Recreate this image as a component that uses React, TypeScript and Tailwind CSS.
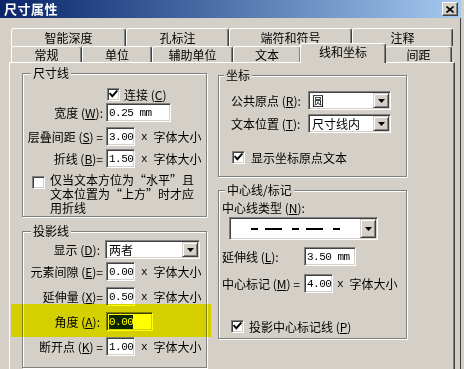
import React from "react";

const U = ({ c }: { c: string }) => <span className="underline underline-offset-[1px]">{c}</span>;

function Tab({ label, w, cls = "" }: { label: string; w: string; cls?: string }) {
  return (
    <div
      className={`flex items-center justify-center shrink-0 bg-[#d4d0c8] border-t border-l border-r border-t-white border-l-white border-r-[#404040] rounded-t-[3px] shadow-[inset_-1px_0_0_#808080] ${w} ${cls}`}
    >
      {label}
    </div>
  );
}

function Group({ label, cls, labelCls, children }: { label: string; cls: string; labelCls: string; children?: React.ReactNode }) {
  return (
    <div className={`relative border border-[#808080] shadow-[inset_1px_1px_0_#ffffff,1px_1px_0_#ffffff] ${cls}`}>
      <span className={`absolute -top-[8px] bg-[#d4d0c8] px-[2px] leading-[14px] ${labelCls}`}>{label}</span>
      {children}
    </div>
  );
}

function Input({ value, w, selected }: { value: string; w: string; selected?: boolean }) {
  return (
    <div
      className={`flex items-center h-full bg-white border border-t-[#808080] border-l-[#808080] border-r-white border-b-white shadow-[inset_1px_1px_0_#404040,inset_-1px_-1px_0_#d4d0c8] pl-[2px] font-['Liberation_Mono',monospace] text-[11px] tracking-[-0.5px] ${w}`}
    >
      {selected ? <span className="bg-[#0a246a] text-white leading-[14px]">{value}</span> : value}
    </div>
  );
}

function Arrow() {
  return (
    <svg width="7" height="4" viewBox="0 0 7 4">
      <path d="M0 0H7L3.5 4Z" fill="#000" />
    </svg>
  );
}

function DropBtn() {
  return (
    <div className="flex items-center justify-center w-[16px] h-full bg-[#d4d0c8] border border-t-[#d4d0c8] border-l-[#d4d0c8] border-r-[#404040] border-b-[#404040] shadow-[inset_1px_1px_0_#ffffff,inset_-1px_-1px_0_#808080]">
      <Arrow />
    </div>
  );
}

function Combo({ value, w, h = "h-full" }: { value: React.ReactNode; w: string; h?: string }) {
  return (
    <div
      className={`flex items-stretch bg-white border border-t-[#808080] border-l-[#808080] border-r-white border-b-white shadow-[inset_1px_1px_0_#404040,inset_-1px_-1px_0_#d4d0c8] p-[1px] ${w} ${h}`}
    >
      <div className="flex-1 flex items-center pl-[2px]">{value}</div>
      <DropBtn />
    </div>
  );
}

function Check({ checked }: { checked?: boolean }) {
  return (
    <div className="w-[13px] h-[13px] shrink-0 bg-white border border-t-[#808080] border-l-[#808080] border-r-white border-b-white shadow-[inset_1px_1px_0_#404040,inset_-1px_-1px_0_#d4d0c8] flex items-center justify-center">
      {checked && (
        <svg width="9" height="9" viewBox="0 0 9 9">
          <path d="M1.2 3.8L3.3 6.2L7.8 1.2" stroke="#000" strokeWidth="1.9" fill="none" strokeLinecap="square" />
        </svg>
      )}
    </div>
  );
}

const Times = ({ ml = "ml-[6px]" }: { ml?: string }) => (
  <>
    <span className={`${ml} font-['Liberation_Mono',monospace] text-[11px]`}>x</span>
    <span className="ml-[6px]">字体大小</span>
  </>
);

export default function App() {
  return (
    <div className="relative w-[464px] h-[369px] overflow-hidden bg-[#d4d0c8] text-black text-[12px] leading-[14px] font-['Noto_Sans_CJK_SC','Noto_Sans',sans-serif] shadow-[inset_-3px_0_0_#d4d0c8,inset_-4px_0_0_#404040]">
      {/* title bar */}
      <div className="flex items-center h-[18px] w-[461px] bg-linear-to-r from-[#0a246a] to-[#a6caf0] pl-[4px] pr-[3px]">
        <span className="text-white font-bold text-[13px] tracking-[0.5px]">尺寸属性</span>
        <div className="ml-auto flex items-center justify-center w-[16px] h-[14px] bg-[#d4d0c8] border border-t-white border-l-white border-r-[#404040] border-b-[#404040] shadow-[inset_-1px_-1px_0_#808080]">
          <svg width="8" height="7" viewBox="0 0 8 7">
            <path d="M0.5 0.5L7.5 6.5M7.5 0.5L0.5 6.5" stroke="#000" strokeWidth="1.6" />
          </svg>
        </div>
      </div>

      {/* tabs */}
      <div className="pt-[10px] pl-[11px]">
        <div className="flex h-[18px]">
          <Tab label="智能深度" w="w-[115px]" />
          <Tab label="孔标注" w="w-[103px]" />
          <Tab label="端符和符号" w="w-[123px]" />
          <Tab label="注释" w="w-[101px]" />
        </div>
        <div className="flex items-end h-[16px] relative z-10">
          <Tab label="常规" w="w-[71px]" cls="h-[16px]" />
          <Tab label="单位" w="w-[70px]" cls="h-[16px]" />
          <Tab label="辅助单位" w="w-[81px]" cls="h-[16px]" />
          <Tab label="文本" w="w-[68px]" cls="h-[16px]" />
          <Tab label="线和坐标" w="w-[86px]" cls="h-[20px] -mb-[1px] -mx-[1px] relative z-10 pb-[3px]" />
          <Tab label="间距" w="w-[67px]" cls="h-[16px]" />
        </div>
      </div>

      {/* panel */}
      <div className="ml-[9px] w-[446px] h-[310px] border border-t-white border-l-white border-r-[#404040] border-b-[#404040] shadow-[inset_-1px_-1px_0_#808080] flex">
        {/* left column */}
        <div className="ml-[12px] mt-[10px] w-[185px] flex flex-col">
          <Group label="尺寸线" cls="h-[144px]" labelCls="left-[8px]">
            <div className="mt-[14px] flex items-center h-[13px] pl-[84px]">
              <Check checked />
              <span className="ml-[4px]">连接 (<U c="C" />)</span>
            </div>
            <div className="mt-[2px] flex items-center h-[19px]">
              <span className="w-[80px] text-right">宽度 (<U c="W" />):</span>
              <div className="ml-[3px] h-full flex">
                <Input value="0.25 mm" w="w-[65px]" />
              </div>
            </div>
            <div className="mt-[5px] flex items-center h-[19px]">
              <span className="w-[80px] text-right whitespace-nowrap">层叠间距 (<U c="S" />) =</span>
              <div className="ml-[3px] h-full flex">
                <Input value="3.00" w="w-[29px]" />
              </div>
              <Times />
            </div>
            <div className="mt-[3px] flex items-center h-[19px]">
              <span className="w-[80px] text-right">折线 (<U c="B" />)=</span>
              <div className="ml-[3px] h-full flex">
                <Input value="1.50" w="w-[29px]" />
              </div>
              <Times />
            </div>
            <div className="mt-[5px] flex items-start pl-[9px]">
              <div className="mt-[3px]">
                <Check />
              </div>
              <div className="ml-[5px] flex flex-col">
                <div className="h-[14px] leading-[13px] whitespace-nowrap">仅当文本方位为“水平”且</div>
                <div className="h-[14px] leading-[13px] whitespace-nowrap">文本位置为“上方”时才应</div>
                <div className="h-[14px] leading-[13px] whitespace-nowrap">用折线</div>
              </div>
            </div>
          </Group>

          <Group label="投影线" cls="mt-[14px] h-[137px]" labelCls="left-[8px]">
            <div className="mt-[8px] flex items-center h-[19px]">
              <span className="w-[80px] text-right pr-[3px]">显示 (<U c="D" />):</span>
              <div className="ml-[2px] h-full flex">
                <Combo value="两者" w="w-[95px]" />
              </div>
            </div>
            <div className="mt-[3px] flex items-center h-[19px]">
              <span className="w-[80px] text-right whitespace-nowrap">元素间隙 (<U c="E" />)=</span>
              <div className="ml-[3px] h-full flex">
                <Input value="0.00" w="w-[29px]" />
              </div>
              <Times />
            </div>
            <div className="mt-[6px] flex items-center h-[19px]">
              <span className="w-[80px] text-right">延伸量 (<U c="X" />)=</span>
              <div className="ml-[3px] h-full flex">
                <Input value="0.50" w="w-[29px]" />
              </div>
              <Times />
            </div>
            <div className="mt-[6px] flex items-center h-[19px]">
              <span className="w-[80px] text-right pr-[3px]">角度 (<U c="A" />):</span>
              <div className="ml-[3px] h-full flex">
                <Input value="0.00" w="w-[47px]" selected />
              </div>
            </div>
            <div className="mt-[6px] flex items-center h-[19px]">
              <span className="w-[80px] text-right">断开点 (<U c="K" />) =</span>
              <div className="ml-[3px] h-full flex">
                <Input value="1.00" w="w-[29px]" />
              </div>
              <Times />
            </div>
          </Group>
        </div>

        {/* right column */}
        <div className="ml-[11px] mt-[12px] w-[189px] flex flex-col">
          <Group label="坐标" cls="h-[102px]" labelCls="left-[5px]">
            <div className="mt-[15px] flex items-center h-[19px] pl-[12px]">
              <span className="w-[77px]">公共原点 (<U c="R" />):</span>
              <div className="h-full flex">
                <Combo value="圆" w="w-[83px]" />
              </div>
            </div>
            <div className="mt-[4px] flex items-center h-[19px] pl-[12px]">
              <span className="w-[77px]">文本位置 (<U c="T" />):</span>
              <div className="h-full flex">
                <Combo value="尺寸线内" w="w-[83px]" />
              </div>
            </div>
            <div className="mt-[18px] flex items-center h-[13px] pl-[13px]">
              <Check checked />
              <span className="ml-[6px]">显示坐标原点文本</span>
            </div>
          </Group>

          <Group label="中心线/标记" cls="mt-[13px] h-[149px]" labelCls="left-[6px]">
            <div className="mt-[10px] pl-[3px] h-[14px] flex items-center">
              <span>中心线类型 (<U c="N" />):</span>
            </div>
            <div className="mt-[2px] pl-[10px] flex">
              <Combo
                w="w-[149px]"
                h="h-[23px]"
                value={
                  <svg width="92" height="4" viewBox="0 0 92 4" className="ml-[18px]">
                    <rect x="0" y="1" width="7" height="2" fill="#000" />
                    <rect x="14" y="1" width="17" height="2" fill="#000" />
                    <rect x="41" y="1" width="7" height="2" fill="#000" />
                    <rect x="55" y="1" width="17" height="2" fill="#000" />
                    <rect x="82" y="1" width="7" height="2" fill="#000" />
                  </svg>
                }
              />
            </div>
            <div className="mt-[7px] flex items-center h-[19px] pl-[3px]">
              <span className="w-[82px]">延伸线 (<U c="L" />):</span>
              <div className="h-full flex">
                <Input value="3.50 mm" w="w-[52px]" />
              </div>
            </div>
            <div className="mt-[8px] flex items-center h-[19px] pl-[3px]">
              <span className="w-[82px] whitespace-nowrap">中心标记 (<U c="M" />) =</span>
              <div className="h-full flex">
                <Input value="4.00" w="w-[29px]" />
              </div>
              <Times ml="ml-[4px]" />
            </div>
            <div className="mt-[27px] flex items-center h-[13px] pl-[12px]">
              <Check checked />
              <span className="ml-[5px]">投影中心标记线 (<U c="P" />)</span>
            </div>
          </Group>
        </div>
      </div>

      {/* yellow highlight overlay */}
      <div className="absolute left-[11px] top-[304px] w-[200px] h-[33px] bg-[#ffff00] mix-blend-multiply pointer-events-none" />
    </div>
  );
}
